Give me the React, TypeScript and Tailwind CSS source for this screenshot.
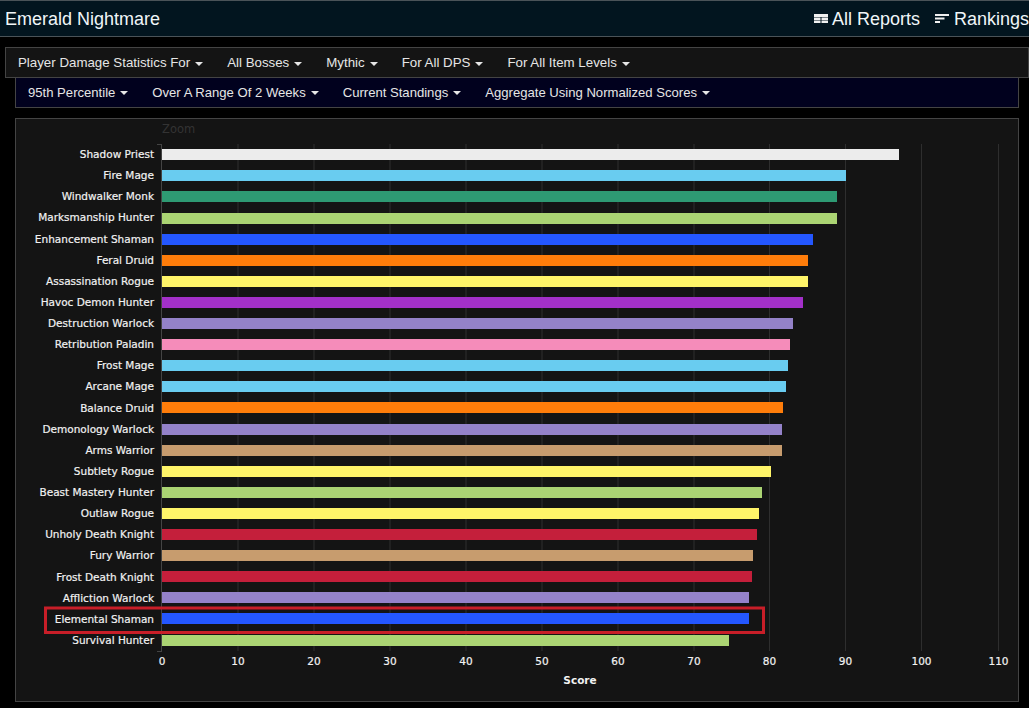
const bars: [string, number, string][] = [
  ["Shadow Priest", 899, "#ececec"],
  ["Fire Mage", 846, "#69ccf0"],
  ["Windwalker Monk", 837, "#2e9a73"],
  ["Marksmanship Hunter", 837, "#abd473"],
  ["Enhancement Shaman", 813, "#2457ff"],
  ["Feral Druid", 808, "#ff7d0a"],
  ["Assassination Rogue", 808, "#fff569"],
  ["Havoc Demon Hunter", 803, "#a330c9"],
  ["Destruction Warlock", 793, "#9482c9"],
  ["Retribution Paladin", 790, "#f58cba"],
  ["Frost Mage", 788, "#69ccf0"],
  ["Arcane Mage", 786, "#69ccf0"],
  ["Balance Druid", 783, "#ff7d0a"],
  ["Demonology Warlock", 782, "#9482c9"],
  ["Arms Warrior", 782, "#c79c6e"],
  ["Subtlety Rogue", 771, "#fff569"],
  ["Beast Mastery Hunter", 762, "#abd473"],
  ["Outlaw Rogue", 759, "#fff569"],
  ["Unholy Death Knight", 757, "#c41f3b"],
  ["Fury Warrior", 753, "#c79c6e"],
  ["Frost Death Knight", 752, "#c41f3b"],
  ["Affliction Warlock", 749, "#9482c9"],
  ["Elemental Shaman", 749, "#2457ff"],
  ["Survival Hunter", 729, "#abd473"],
];

const ticks: [string, number][] = [
  ["0", 162], ["10", 238], ["20", 314], ["30", 390], ["40", 466], ["50", 542],
  ["60", 618], ["70", 694], ["80", 769.5], ["90", 845.5], ["100", 921.5], ["110", 998.5],
];

const row1 = ["Player Damage Statistics For", "All Bosses", "Mythic", "For All DPS", "For All Item Levels"];
const row2 = ["95th Percentile", "Over A Range Of 2 Weeks", "Current Standings", "Aggregate Using Normalized Scores"];

function Item({ label, small }: { label: string; small?: boolean }) {
  return (
    <span className={`flex items-center px-3 ${small ? "text-[13.1px]" : "text-[13.3px]"} text-[#e6e6e6] whitespace-nowrap`}>
      {label}
      <span className="ml-[5px] mt-[2px] w-0 h-0 border-x-4 border-x-transparent border-t-4 border-t-[#e6e6e6]" />
    </span>
  );
}

export default function App() {
  return (
    <div className="h-[708px] w-[1029px] overflow-hidden bg-black font-['Liberation_Sans',Arial,sans-serif]">
      <header className="h-[37px] border-y border-[#4a5358] bg-[#02151f] flex items-center justify-between pl-[5px] pr-0 text-lg text-[#f0f6f8]">
        <span>Emerald Nightmare</span>
        <div className="flex items-center">
          <svg width="14" height="9" viewBox="0 0 14 9" className="mr-[4px]" fill="#f0f0f0">
            <rect x="0" y="0" width="14" height="3" />
            <rect x="0" y="3.5" width="6.5" height="2.5" />
            <rect x="7.5" y="3.5" width="6.5" height="2.5" />
            <rect x="0" y="6.5" width="6.5" height="2.5" />
            <rect x="7.5" y="6.5" width="6.5" height="2.5" />
          </svg>
          <span>All Reports</span>
          <svg width="14" height="9" viewBox="0 0 14 9" className="ml-[15px] mr-[5px]" fill="#f0f0f0">
            <rect x="0" y="0" width="14" height="2" />
            <rect x="0" y="3.5" width="9.5" height="2" />
            <rect x="0" y="7" width="5" height="2" />
          </svg>
          <span>Rankings</span>
        </div>
      </header>
      <nav className="mt-[10px] ml-[5px] h-[31px] border border-[#444] bg-[#141414] flex items-center">
        {row1.map((t) => <Item key={t} label={t} />)}
      </nav>
      <nav className="ml-[15px] mr-[10px] h-[30px] border border-t-0 border-[#444] bg-[#01011e] flex items-center">
        {row2.map((t) => <Item key={t} label={t} small />)}
      </nav>
      <section className="mt-[10px] ml-[15px] mr-[10px] h-[584px] border border-[#444] bg-[#141414]">
        <svg width="1002" height="582" viewBox="16 119 1002 582" className="block font-['DejaVu_Sans',Verdana,sans-serif]">
          <text x="162" y="133" fontSize="11.5" fill="#333">Zoom</text>
          {ticks.slice(1).map(([t, x]) => (
            <line key={t} x1={x} x2={x} y1="144" y2="651" stroke="#2e2e2e" />
          ))}
          <line x1="161.5" x2="161.5" y1="144" y2="652" stroke="#444" />
          <line x1="157" x2="161" y1="144.5" y2="144.5" stroke="#444" />
          <line x1="157" x2="161" y1="651.5" y2="651.5" stroke="#444" />
          {bars.map(([name, end, color], i) => (
            <g key={name}>
              <rect x="162" y={Math.round(149.25 + i * 21.1)} width={end - 162} height="11" fill={color} />
              <text x="154" y={Math.round(158.05 + i * 21.125)} textAnchor="end" fontSize="10.5" fill="#f2f2f2" stroke="#f2f2f2" strokeWidth="0.2">{name}</text>
            </g>
          ))}
          {ticks.map(([t, x]) => (
            <text key={t} x={x} y="665" textAnchor="middle" fontSize="10.5" fill="#f2f2f2" stroke="#f2f2f2" strokeWidth="0.2">{t}</text>
          ))}
          <text x="580" y="684" textAnchor="middle" fontSize="10.5" fontWeight="700" fill="#f2f2f2">Score</text>
          <rect x="45.5" y="608" width="718" height="24.5" fill="none" stroke="#c81e28" strokeWidth="3" />
        </svg>
      </section>
    </div>
  );
}
